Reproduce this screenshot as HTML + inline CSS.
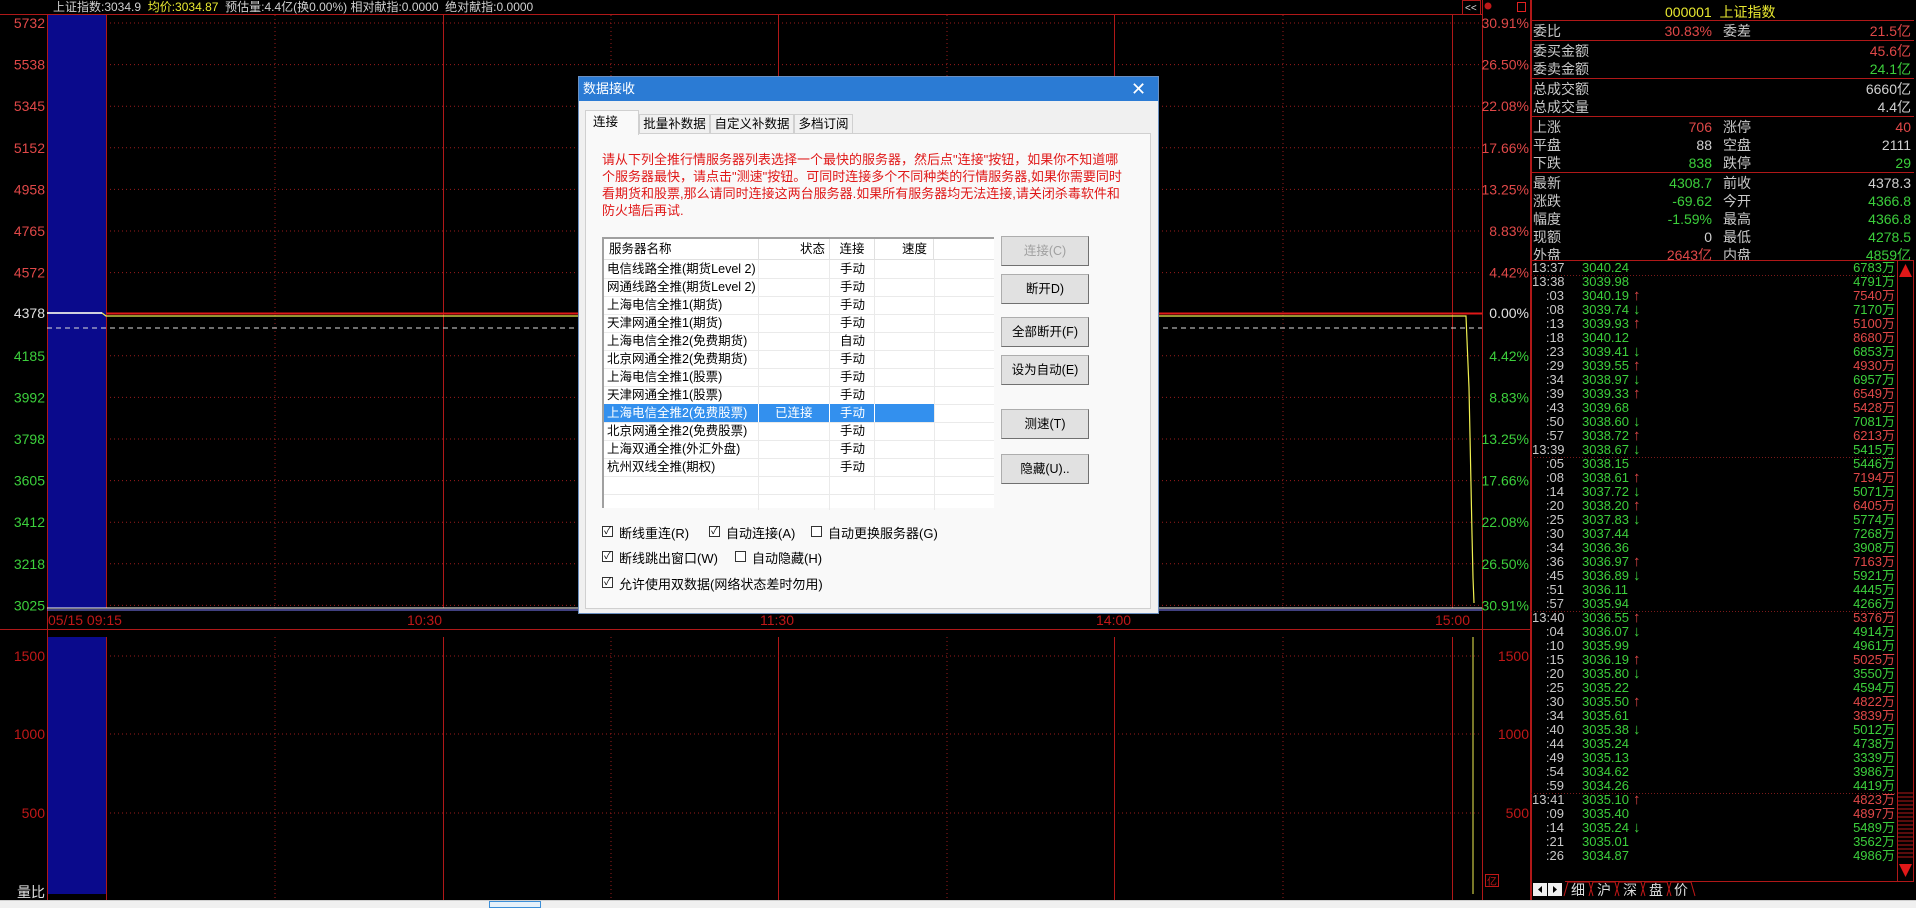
<!DOCTYPE html>
<html><head><meta charset="utf-8">
<style>
*{margin:0;padding:0;box-sizing:border-box}
body{width:1916px;height:908px;background:#000;position:relative;overflow:hidden;font-family:"Liberation Sans","Noto Sans CJK SC",sans-serif;color:#c8c8c8}
.a{position:absolute;white-space:nowrap}
.r{color:#e04848}.g{color:#3ccf3c}.w{color:#d0d0d0}.y{color:#e8e830}
.rp{position:absolute;left:1531px;width:385px;font-size:14px;line-height:18px}
.rp .l{position:absolute;left:2px}
.rp .v1{position:absolute;right:204px;text-align:right}
.rp .l2{position:absolute;left:192px}
.rp .v2{position:absolute;right:5px;text-align:right}
.tk{position:absolute;left:1531px;width:366px;height:14px;font-size:13px;line-height:14px}
.tk .t{position:absolute;left:1px;width:60px}
.tk .t2{position:absolute;right:333px;text-align:right}
.tk .p{position:absolute;left:51px}
.tk .ar{position:absolute;left:102px;font-weight:bold;font-size:15px}
.tk .v{position:absolute;right:2px;text-align:right}
.dlg{position:absolute;left:578px;top:76px;width:581px;height:538px;background:#f0f0f0;border:1px solid #6a8fc0;font-size:12.5px;color:#000}
.btn{position:absolute;left:422px;width:88px;height:30px;background:#e1e1e1;border:1px solid #adadad;border-right-color:#707070;border-bottom-color:#707070;text-align:center;line-height:28px;font-size:12.5px}
.row{position:absolute;left:0;width:390px;height:18px;line-height:18px}
.row span{position:absolute}
.cb{position:absolute;width:11px;height:11px;border:1px solid #333;background:#fff;font-size:10px;line-height:9px;text-align:center}
.cl{position:absolute;font-size:13px}
</style></head><body>

<svg class="a" style="left:0;top:0" width="1531" height="908">
<line x1="0" y1="14.5" x2="1482" y2="14.5" stroke="#b01818"/>
<rect x="48" y="15" width="58" height="593" fill="#0a0a8c"/>
<rect x="48" y="637" width="58" height="257" fill="#0a0a8c"/>
<g stroke="#9a1c1c" stroke-dasharray="1,3">
<line x1="106" y1="23" x2="1482" y2="23"/><line x1="106" y1="64.6" x2="1482" y2="64.6"/><line x1="106" y1="106.2" x2="1482" y2="106.2"/><line x1="106" y1="147.8" x2="1482" y2="147.8"/><line x1="106" y1="189.4" x2="1482" y2="189.4"/><line x1="106" y1="231" x2="1482" y2="231"/><line x1="106" y1="272.6" x2="1482" y2="272.6"/><line x1="106" y1="355.8" x2="1482" y2="355.8"/><line x1="106" y1="397.4" x2="1482" y2="397.4"/><line x1="106" y1="439" x2="1482" y2="439"/><line x1="106" y1="480.6" x2="1482" y2="480.6"/><line x1="106" y1="522.2" x2="1482" y2="522.2"/><line x1="106" y1="563.8" x2="1482" y2="563.8"/><line x1="106" y1="605.4" x2="1482" y2="605.4"/>
<line x1="106" y1="656" x2="1482" y2="656"/><line x1="106" y1="734" x2="1482" y2="734"/><line x1="106" y1="813" x2="1482" y2="813"/>
<line x1="275" y1="15" x2="275" y2="608"/><line x1="611" y1="15" x2="611" y2="608"/><line x1="947" y1="15" x2="947" y2="608"/><line x1="1283" y1="15" x2="1283" y2="608"/>
<line x1="275" y1="637" x2="275" y2="900"/><line x1="611" y1="637" x2="611" y2="900"/><line x1="947" y1="637" x2="947" y2="900"/><line x1="1283" y1="637" x2="1283" y2="900"/>
</g>
<g stroke="#b01818">
<line x1="47.5" y1="14" x2="47.5" y2="900"/><line x1="106.5" y1="15" x2="106.5" y2="608"/><line x1="443.5" y1="15" x2="443.5" y2="608"/><line x1="778.5" y1="15" x2="778.5" y2="608"/><line x1="1114.5" y1="15" x2="1114.5" y2="608"/><line x1="1452.5" y1="15" x2="1452.5" y2="608"/>
<line x1="106.5" y1="637" x2="106.5" y2="900"/><line x1="443.5" y1="637" x2="443.5" y2="900"/><line x1="778.5" y1="637" x2="778.5" y2="900"/><line x1="1114.5" y1="637" x2="1114.5" y2="900"/><line x1="1452.5" y1="637" x2="1452.5" y2="900"/>
<line x1="1482.5" y1="0" x2="1482.5" y2="900"/><line x1="1530.5" y1="0" x2="1530.5" y2="900"/>
<line x1="0" y1="629.5" x2="1531" y2="629.5"/>
</g>
<line x1="106" y1="313.5" x2="1482" y2="313.5" stroke="#e01818" stroke-width="2"/>
<polyline points="47,313 102,313 106,316 1466,316 1467,340 1469,388 1470,436 1471,485 1472,534 1473,578 1474,603" fill="none" stroke="#f0f050" stroke-width="1.2"/>
<line x1="47" y1="313" x2="102" y2="313" stroke="#fff" stroke-width="1.5"/>
<line x1="47" y1="328" x2="1482" y2="328" stroke="#ddd" stroke-dasharray="5,4"/>
<line x1="47" y1="608" x2="1482" y2="608" stroke="#fff"/>
<line x1="47" y1="610" x2="1482" y2="610" stroke="#8080ff"/>
<line x1="1473" y1="637" x2="1473" y2="894" stroke="#f0f050"/>
<g font-size="14" text-anchor="end" font-family="Liberation Sans, sans-serif">
<g fill="#e04848"><text x="45" y="28">5732</text><text x="45" y="69.6">5538</text><text x="45" y="111.2">5345</text><text x="45" y="152.8">5152</text><text x="45" y="194.4">4958</text><text x="45" y="236">4765</text><text x="45" y="277.6">4572</text></g>
<text x="45" y="318" fill="#e0e0e0">4378</text>
<g fill="#3ccf3c"><text x="45" y="360.8">4185</text><text x="45" y="402.4">3992</text><text x="45" y="444">3798</text><text x="45" y="485.6">3605</text><text x="45" y="527.2">3412</text><text x="45" y="568.8">3218</text><text x="45" y="610.4">3025</text></g>
<g fill="#e04848"><text x="1529" y="28">30.91%</text><text x="1529" y="69.6">26.50%</text><text x="1529" y="111.2">22.08%</text><text x="1529" y="152.8">17.66%</text><text x="1529" y="194.4">13.25%</text><text x="1529" y="236">8.83%</text><text x="1529" y="277.6">4.42%</text></g>
<text x="1529" y="318" fill="#e0e0e0">0.00%</text>
<g fill="#3ccf3c"><text x="1529" y="360.8">4.42%</text><text x="1529" y="402.4">8.83%</text><text x="1529" y="444">13.25%</text><text x="1529" y="485.6">17.66%</text><text x="1529" y="527.2">22.08%</text><text x="1529" y="568.8">26.50%</text><text x="1529" y="610.4">30.91%</text></g>
<g fill="#c01818"><text x="45" y="661">1500</text><text x="45" y="739">1000</text><text x="45" y="818">500</text><text x="1529" y="661">1500</text><text x="1529" y="739">1000</text><text x="1529" y="818">500</text>
<text x="442" y="625">10:30</text><text x="1470" y="625">15:00</text></g>
<g fill="#c01818" text-anchor="start"><text x="48" y="625">05/15 09:15</text><text x="760" y="625">11:30</text><text x="1096" y="625">14:00</text></g>
<text x="45" y="897" fill="#e0e0e0">量比</text>
</g>
<rect x="1462.5" y="0.5" width="18" height="14" fill="none" stroke="#b01818"/>
<text x="1465" y="11" font-size="10" fill="#ddd" font-family="Liberation Sans">&lt;&lt;</text>
<circle cx="1488" cy="6" r="3.5" fill="#c01818"/>
<rect x="1517.5" y="2.5" width="8" height="9" fill="none" stroke="#e02020"/>
<rect x="1485.5" y="874.5" width="13" height="12" fill="none" stroke="#c01818"/>
<text x="1487" y="885" font-size="10" fill="#c01818">亿</text>
</svg>

<div class="a" style="left:53px;top:1px;font-size:12px;line-height:13px"><span class="w">上证指数:3034.9</span>&nbsp; <span class="y">均价:3034.87</span>&nbsp; <span class="w">预估量:4.4亿(换0.00%) 相对献指:0.0000&nbsp; 绝对献指:0.0000</span></div>

<div class="a" style="left:1531px;top:0;width:385px;height:900px;border-left:1px solid #b01818"></div>
<div class="a y" style="left:1665px;top:2px;font-size:14px">000001&nbsp;&nbsp;上证指数</div>
<svg class="a" style="left:1531px;top:0" width="385" height="900">
<g stroke="#b01818"><line x1="0" y1="20.5" x2="383" y2="20.5"/><line x1="0" y1="40.5" x2="383" y2="40.5"/><line x1="0" y1="78.5" x2="383" y2="78.5"/><line x1="0" y1="116.5" x2="383" y2="116.5"/><line x1="0" y1="172.5" x2="383" y2="172.5"/><line x1="0" y1="260.5" x2="383" y2="260.5"/>
<line x1="382.5" y1="260" x2="382.5" y2="881"/><line x1="366.5" y1="260" x2="366.5" y2="881"/><line x1="34" y1="881.5" x2="383" y2="881.5"/></g>
<g stroke="#7a1a1a" stroke-dasharray="1,2"><line x1="0" y1="275.5" x2="366" y2="275.5"/><line x1="0" y1="457.5" x2="366" y2="457.5"/><line x1="0" y1="611.5" x2="366" y2="611.5"/><line x1="0" y1="793.5" x2="366" y2="793.5"/></g>
<polygon points="374.5,264 368,277 381,277" fill="#e01818"/>
<polygon points="374.5,877 368,864 381,864" fill="#e01818"/>
<g stroke="#b01818"><line x1="367" y1="793" x2="382" y2="793"/><line x1="367" y1="797" x2="382" y2="797"/><line x1="367" y1="801" x2="382" y2="801"/><line x1="367" y1="805" x2="382" y2="805"/><line x1="367" y1="809" x2="382" y2="809"/><line x1="367" y1="813" x2="382" y2="813"/><line x1="367" y1="817" x2="382" y2="817"/><line x1="367" y1="821" x2="382" y2="821"/><line x1="367" y1="825" x2="382" y2="825"/><line x1="367" y1="829" x2="382" y2="829"/><line x1="367" y1="833" x2="382" y2="833"/><line x1="367" y1="837" x2="382" y2="837"/><line x1="367" y1="841" x2="382" y2="841"/><line x1="367" y1="845" x2="382" y2="845"/><line x1="367" y1="849" x2="382" y2="849"/><line x1="367" y1="853" x2="382" y2="853"/><line x1="367" y1="857" x2="382" y2="857"/></g>
<rect x="2" y="883" width="14" height="13" fill="#f0f0f0"/><rect x="17" y="883" width="14" height="13" fill="#f0f0f0"/>
<polygon points="11,886 7,889.5 11,893" fill="#000"/><polygon points="22,886 26,889.5 22,893" fill="#000"/>
<g stroke="#c01818" fill="none"><polyline points="33,896 37,882 58,882 62,896"/><polyline points="58,896 62,882 84,882 88,896"/><polyline points="84,896 88,882 110,882 114,896"/><polyline points="110,896 114,882 136,882 140,896"/><polyline points="136,896 140,882 160,882 164,896"/></g>
<g fill="#ddd" font-size="14"><text x="40" y="895">细</text><text x="66" y="895">沪</text><text x="92" y="895">深</text><text x="118" y="895">盘</text><text x="143" y="895">价</text></g>
</svg>
<div class="rp" style="top:22px"><span class="l">委比</span><span class="v1 r">30.83%</span><span class="l2">委差</span><span class="v2 r">21.5亿</span></div>
<div class="rp" style="top:42px"><span class="l">委买金额</span><span class="v2 r">45.6亿</span></div>
<div class="rp" style="top:60px"><span class="l">委卖金额</span><span class="v2 g">24.1亿</span></div>
<div class="rp" style="top:80px"><span class="l">总成交额</span><span class="v2 w">6660亿</span></div>
<div class="rp" style="top:98px"><span class="l">总成交量</span><span class="v2 w">4.4亿</span></div>
<div class="rp" style="top:118px"><span class="l">上涨</span><span class="v1 r">706</span><span class="l2">涨停</span><span class="v2 r">40</span></div>
<div class="rp" style="top:136px"><span class="l">平盘</span><span class="v1 w">88</span><span class="l2">空盘</span><span class="v2 w">2111</span></div>
<div class="rp" style="top:154px"><span class="l">下跌</span><span class="v1 g">838</span><span class="l2">跌停</span><span class="v2 g">29</span></div>
<div class="rp" style="top:174px"><span class="l">最新</span><span class="v1 g">4308.7</span><span class="l2">前收</span><span class="v2 w">4378.3</span></div>
<div class="rp" style="top:192px"><span class="l">涨跌</span><span class="v1 g">-69.62</span><span class="l2">今开</span><span class="v2 g">4366.8</span></div>
<div class="rp" style="top:210px"><span class="l">幅度</span><span class="v1 g">-1.59%</span><span class="l2">最高</span><span class="v2 g">4366.8</span></div>
<div class="rp" style="top:228px"><span class="l">现额</span><span class="v1 w">0</span><span class="l2">最低</span><span class="v2 g">4278.5</span></div>
<div class="rp" style="top:246px;height:14px;overflow:hidden"><span class="l">外盘</span><span class="v1 r">2643亿</span><span class="l2">内盘</span><span class="v2 g">4859亿</span></div>

<div class="tk" style="top:261px"><span class="t">13:37</span><span class="p g">3040.24</span><span class="v g">6783万</span></div>
<div class="tk" style="top:275px"><span class="t">13:38</span><span class="p g">3039.98</span><span class="v g">4791万</span></div>
<div class="tk" style="top:289px"><span class="t2">:03</span><span class="p g">3040.19</span><span class="ar r">↑</span><span class="v r">7540万</span></div>
<div class="tk" style="top:303px"><span class="t2">:08</span><span class="p g">3039.74</span><span class="ar g">↓</span><span class="v g">7170万</span></div>
<div class="tk" style="top:317px"><span class="t2">:13</span><span class="p g">3039.93</span><span class="ar r">↑</span><span class="v r">5100万</span></div>
<div class="tk" style="top:331px"><span class="t2">:18</span><span class="p g">3040.12</span><span class="v r">8680万</span></div>
<div class="tk" style="top:345px"><span class="t2">:23</span><span class="p g">3039.41</span><span class="ar g">↓</span><span class="v g">6853万</span></div>
<div class="tk" style="top:359px"><span class="t2">:29</span><span class="p g">3039.55</span><span class="ar r">↑</span><span class="v r">4930万</span></div>
<div class="tk" style="top:373px"><span class="t2">:34</span><span class="p g">3038.97</span><span class="ar g">↓</span><span class="v g">6957万</span></div>
<div class="tk" style="top:387px"><span class="t2">:39</span><span class="p g">3039.33</span><span class="ar r">↑</span><span class="v r">6549万</span></div>
<div class="tk" style="top:401px"><span class="t2">:43</span><span class="p g">3039.68</span><span class="v r">5428万</span></div>
<div class="tk" style="top:415px"><span class="t2">:50</span><span class="p g">3038.60</span><span class="ar g">↓</span><span class="v g">7081万</span></div>
<div class="tk" style="top:429px"><span class="t2">:57</span><span class="p g">3038.72</span><span class="ar r">↑</span><span class="v r">6213万</span></div>
<div class="tk" style="top:443px"><span class="t">13:39</span><span class="p g">3038.67</span><span class="ar g">↓</span><span class="v g">5415万</span></div>
<div class="tk" style="top:457px"><span class="t2">:05</span><span class="p g">3038.15</span><span class="v g">5446万</span></div>
<div class="tk" style="top:471px"><span class="t2">:08</span><span class="p g">3038.61</span><span class="ar r">↑</span><span class="v r">7194万</span></div>
<div class="tk" style="top:485px"><span class="t2">:14</span><span class="p g">3037.72</span><span class="ar g">↓</span><span class="v g">5071万</span></div>
<div class="tk" style="top:499px"><span class="t2">:20</span><span class="p g">3038.20</span><span class="ar r">↑</span><span class="v r">6405万</span></div>
<div class="tk" style="top:513px"><span class="t2">:25</span><span class="p g">3037.83</span><span class="ar g">↓</span><span class="v g">5774万</span></div>
<div class="tk" style="top:527px"><span class="t2">:30</span><span class="p g">3037.44</span><span class="v g">7268万</span></div>
<div class="tk" style="top:541px"><span class="t2">:34</span><span class="p g">3036.36</span><span class="v g">3908万</span></div>
<div class="tk" style="top:555px"><span class="t2">:36</span><span class="p g">3036.97</span><span class="ar r">↑</span><span class="v r">7163万</span></div>
<div class="tk" style="top:569px"><span class="t2">:45</span><span class="p g">3036.89</span><span class="ar g">↓</span><span class="v g">5921万</span></div>
<div class="tk" style="top:583px"><span class="t2">:51</span><span class="p g">3036.11</span><span class="v g">4445万</span></div>
<div class="tk" style="top:597px"><span class="t2">:57</span><span class="p g">3035.94</span><span class="v g">4266万</span></div>
<div class="tk" style="top:611px"><span class="t">13:40</span><span class="p g">3036.55</span><span class="ar r">↑</span><span class="v r">5376万</span></div>
<div class="tk" style="top:625px"><span class="t2">:04</span><span class="p g">3036.07</span><span class="ar g">↓</span><span class="v g">4914万</span></div>
<div class="tk" style="top:639px"><span class="t2">:10</span><span class="p g">3035.99</span><span class="v g">4961万</span></div>
<div class="tk" style="top:653px"><span class="t2">:15</span><span class="p g">3036.19</span><span class="ar r">↑</span><span class="v r">5025万</span></div>
<div class="tk" style="top:667px"><span class="t2">:20</span><span class="p g">3035.80</span><span class="ar g">↓</span><span class="v g">3550万</span></div>
<div class="tk" style="top:681px"><span class="t2">:25</span><span class="p g">3035.22</span><span class="v g">4594万</span></div>
<div class="tk" style="top:695px"><span class="t2">:30</span><span class="p g">3035.50</span><span class="ar r">↑</span><span class="v r">4822万</span></div>
<div class="tk" style="top:709px"><span class="t2">:34</span><span class="p g">3035.61</span><span class="v r">3839万</span></div>
<div class="tk" style="top:723px"><span class="t2">:40</span><span class="p g">3035.38</span><span class="ar g">↓</span><span class="v g">5012万</span></div>
<div class="tk" style="top:737px"><span class="t2">:44</span><span class="p g">3035.24</span><span class="v g">4738万</span></div>
<div class="tk" style="top:751px"><span class="t2">:49</span><span class="p g">3035.13</span><span class="v g">3339万</span></div>
<div class="tk" style="top:765px"><span class="t2">:54</span><span class="p g">3034.62</span><span class="v g">3986万</span></div>
<div class="tk" style="top:779px"><span class="t2">:59</span><span class="p g">3034.26</span><span class="v g">4419万</span></div>
<div class="tk" style="top:793px"><span class="t">13:41</span><span class="p g">3035.10</span><span class="ar r">↑</span><span class="v r">4823万</span></div>
<div class="tk" style="top:807px"><span class="t2">:09</span><span class="p g">3035.40</span><span class="v r">4897万</span></div>
<div class="tk" style="top:821px"><span class="t2">:14</span><span class="p g">3035.24</span><span class="ar g">↓</span><span class="v g">5489万</span></div>
<div class="tk" style="top:835px"><span class="t2">:21</span><span class="p g">3035.01</span><span class="v g">3562万</span></div>
<div class="tk" style="top:849px"><span class="t2">:26</span><span class="p g">3034.87</span><span class="v g">4986万</span></div>

<div class="a" style="left:0;top:900px;width:1916px;height:8px;background:#f0f0f0;border-top:1px solid #d0d0d0"></div>
<div class="a" style="left:489px;top:901px;width:52px;height:7px;background:#e5f1fb;border:1px solid #3c8fd8"></div>

<div class="dlg">
 <div class="a" style="left:0;top:0;width:579px;height:24px;background:#2b7bd4;color:#fff;font-size:13px;line-height:24px;padding-left:4px">数据接收</div>
 <div class="a" style="left:552px;top:1px;color:#fff;font-size:18px;line-height:22px">✕</div>
 <div class="a" style="left:6px;top:56px;width:566px;height:476px;background:#f9f9f9;border:1px solid #d0d0d0"></div>
 <div class="a" style="left:6px;top:33px;width:54px;height:25px;background:#f9f9f9;border:1px solid #d0d0d0;border-bottom:none;line-height:22px;padding-left:7px">连接</div>
 <div class="a" style="left:60px;top:37px;width:71px;height:20px;background:#f0f0f0;border:1px solid #d0d0d0;line-height:19px;text-align:center">批量补数据</div>
 <div class="a" style="left:131px;top:37px;width:84px;height:20px;background:#f0f0f0;border:1px solid #d0d0d0;line-height:19px;text-align:center">自定义补数据</div>
 <div class="a" style="left:215px;top:37px;width:59px;height:20px;background:#f0f0f0;border:1px solid #d0d0d0;line-height:19px;text-align:center">多档订阅</div>
 <div class="a" style="left:23px;top:74px;color:#e01818;font-size:13px;line-height:17px">请从下列全推行情服务器列表选择一个最快的服务器，然后点"连接"按钮，如果你不知道哪<br>个服务器最快，请点击"测速"按钮。可同时连接多个不同种类的行情服务器,如果你需要同时<br>看期货和股票,那么请同时连接这两台服务器.如果所有服务器均无法连接,请关闭杀毒软件和<br>防火墙后再试.</div>
 <div class="a" style="left:23px;top:160px;width:392px;height:271px;background:#fff;border-top:2px solid #a0a0a0;border-left:2px solid #a0a0a0">
  <div class="a" style="left:0;top:0;width:390px;height:21px;border-bottom:1px solid #e0e0e0;line-height:20px">
   <span class="a" style="left:5px">服务器名称</span><span class="a" style="left:154px;width:71px;text-align:right;border-left:1px solid #e0e0e0;padding-right:4px">状态</span><span class="a" style="left:225px;width:45px;text-align:center;border-left:1px solid #e0e0e0">连接</span><span class="a" style="left:270px;width:60px;text-align:right;border-left:1px solid #e0e0e0;border-right:1px solid #e0e0e0;padding-right:6px">速度</span>
  </div>
  <svg class="a" style="left:0;top:21px" width="390" height="250"><g stroke="#eaeaea"><line x1="154.5" y1="0" x2="154.5" y2="250"/><line x1="225.5" y1="0" x2="225.5" y2="250"/><line x1="270.5" y1="0" x2="270.5" y2="250"/><line x1="330.5" y1="0" x2="330.5" y2="250"/>
  <line x1="0" y1="18.5" x2="390" y2="18.5"/><line x1="0" y1="36.5" x2="390" y2="36.5"/><line x1="0" y1="54.5" x2="390" y2="54.5"/><line x1="0" y1="72.5" x2="390" y2="72.5"/><line x1="0" y1="90.5" x2="390" y2="90.5"/><line x1="0" y1="108.5" x2="390" y2="108.5"/><line x1="0" y1="126.5" x2="390" y2="126.5"/><line x1="0" y1="144.5" x2="390" y2="144.5"/><line x1="0" y1="162.5" x2="390" y2="162.5"/><line x1="0" y1="180.5" x2="390" y2="180.5"/><line x1="0" y1="198.5" x2="390" y2="198.5"/><line x1="0" y1="216.5" x2="390" y2="216.5"/><line x1="0" y1="234.5" x2="390" y2="234.5"/></g></svg>
  <div class="row" style="top:21px"><span style="left:3px">电信线路全推(期货Level 2)</span><span style="left:236px">手动</span></div>
  <div class="row" style="top:39px"><span style="left:3px">网通线路全推(期货Level 2)</span><span style="left:236px">手动</span></div>
  <div class="row" style="top:57px"><span style="left:3px">上海电信全推1(期货)</span><span style="left:236px">手动</span></div>
  <div class="row" style="top:75px"><span style="left:3px">天津网通全推1(期货)</span><span style="left:236px">手动</span></div>
  <div class="row" style="top:93px"><span style="left:3px">上海电信全推2(免费期货)</span><span style="left:236px">自动</span></div>
  <div class="row" style="top:111px"><span style="left:3px">北京网通全推2(免费期货)</span><span style="left:236px">手动</span></div>
  <div class="row" style="top:129px"><span style="left:3px">上海电信全推1(股票)</span><span style="left:236px">手动</span></div>
  <div class="row" style="top:147px"><span style="left:3px">天津网通全推1(股票)</span><span style="left:236px">手动</span></div>
  <div class="row" style="top:165px;width:330px;background:#3390ee;color:#fff"><span style="left:3px">上海电信全推2(免费股票)</span><span style="left:171px">已连接</span><span style="left:236px">手动</span><i class="a" style="left:154px;top:0;width:1px;height:18px;background:#fff"></i><i class="a" style="left:225px;top:0;width:1px;height:18px;background:#fff"></i><i class="a" style="left:270px;top:0;width:1px;height:18px;background:#fff"></i></div>
  <div class="row" style="top:183px"><span style="left:3px">北京网通全推2(免费股票)</span><span style="left:236px">手动</span></div>
  <div class="row" style="top:201px"><span style="left:3px">上海双通全推(外汇外盘)</span><span style="left:236px">手动</span></div>
  <div class="row" style="top:219px"><span style="left:3px">杭州双线全推(期权)</span><span style="left:236px">手动</span></div>
 </div>
 <div class="btn" style="top:159px;color:#a0a0a0">连接(C)</div>
 <div class="btn" style="top:197px">断开D)</div>
 <div class="btn" style="top:240px">全部断开(F)</div>
 <div class="btn" style="top:278px">设为自动(E)</div>
 <div class="btn" style="top:332px">测速(T)</div>
 <div class="btn" style="top:377px">隐藏(U)..</div>
 <div class="cb" style="left:23px;top:449px">✓</div><div class="cl" style="left:40px;top:446px">断线重连(R)</div>
 <div class="cb" style="left:130px;top:449px">✓</div><div class="cl" style="left:147px;top:446px">自动连接(A)</div>
 <div class="cb" style="left:232px;top:449px"></div><div class="cl" style="left:249px;top:446px">自动更换服务器(G)</div>
 <div class="cb" style="left:23px;top:474px">✓</div><div class="cl" style="left:40px;top:471px">断线跳出窗口(W)</div>
 <div class="cb" style="left:156px;top:474px"></div><div class="cl" style="left:173px;top:471px">自动隐藏(H)</div>
 <div class="cb" style="left:23px;top:500px">✓</div><div class="cl" style="left:40px;top:497px">允许使用双数据(网络状态差时勿用)</div>
</div>
</body></html>
